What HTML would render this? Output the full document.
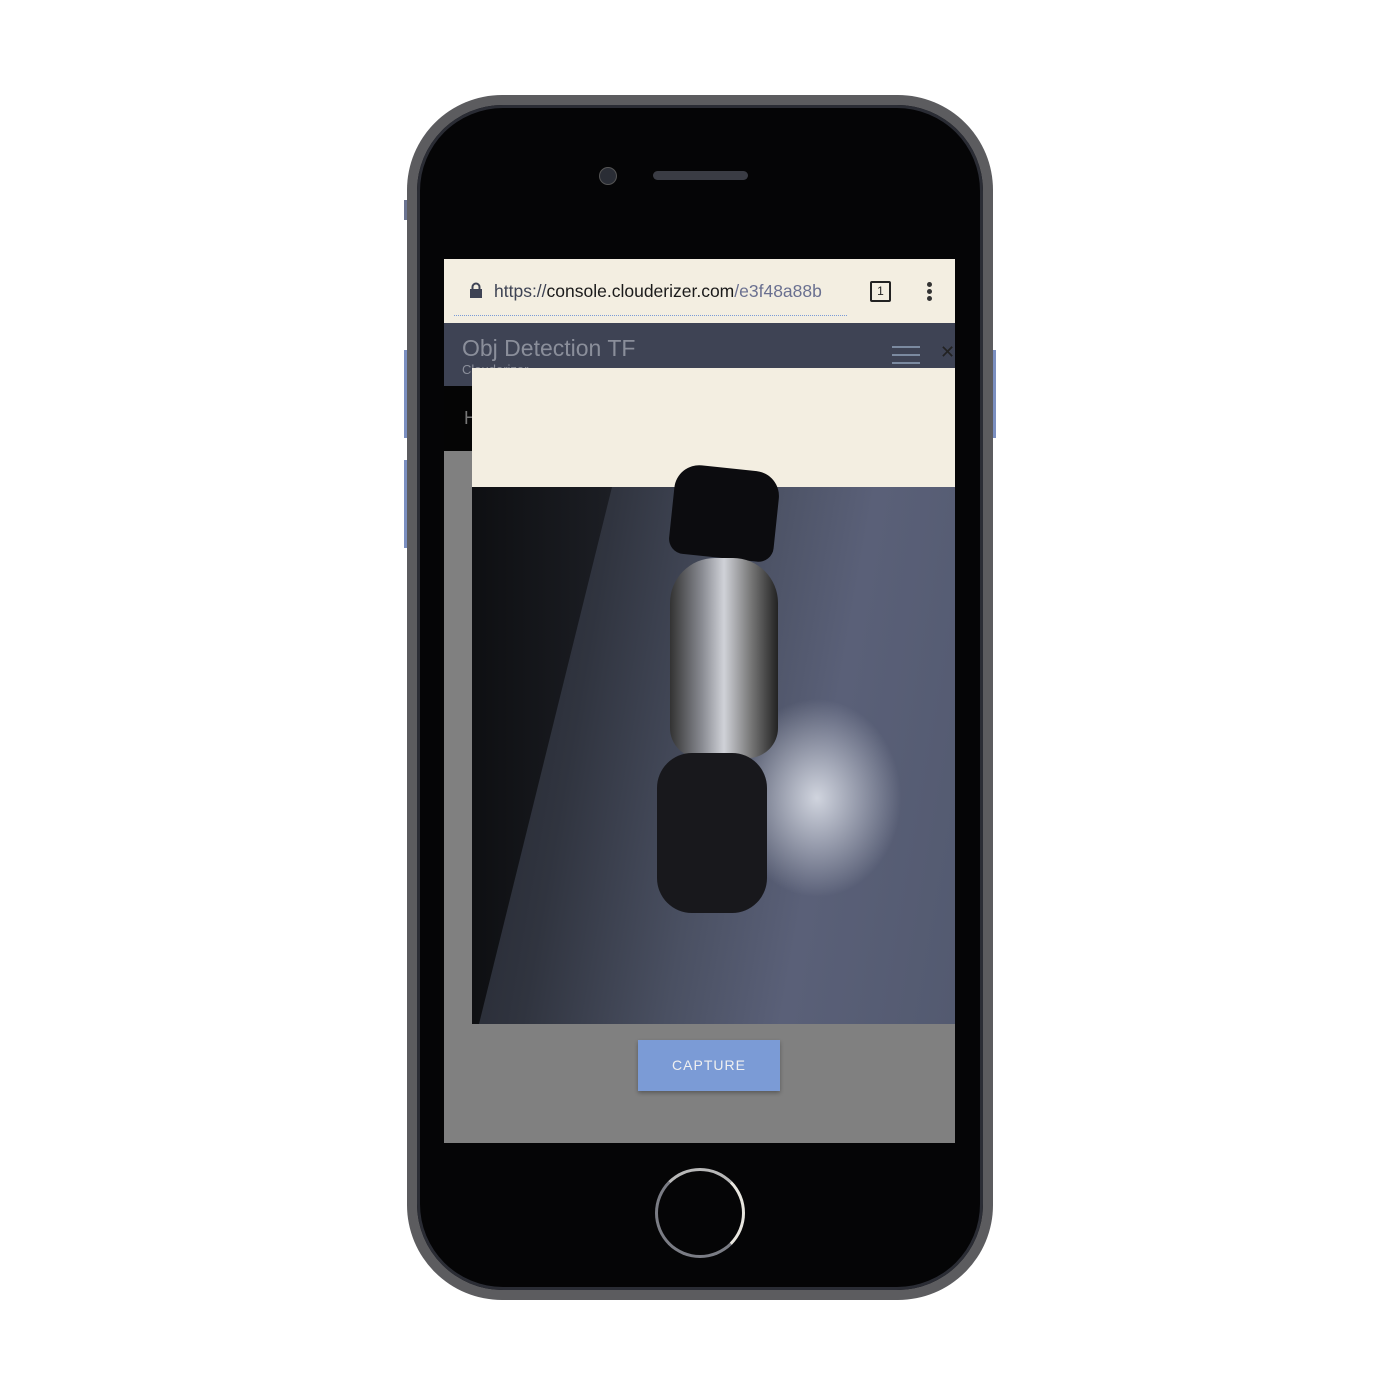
<!DOCTYPE html>
<html><head><style>
body{margin:0;width:1400px;height:1400px;background:#fff;position:relative;overflow:hidden;font-family:"Liberation Sans",sans-serif}
.a{position:absolute}
</style></head><body>
<div class="a" style="left:404px;top:200px;width:4px;height:20px;background:#6a7390"></div>
<div class="a" style="left:404px;top:350px;width:4px;height:88px;background:#7b8fc0"></div>
<div class="a" style="left:404px;top:460px;width:4px;height:88px;background:#7b8fc0"></div>
<div class="a" style="left:992px;top:350px;width:4px;height:88px;background:#7b8fc0"></div>
<div class="a" style="left:407px;top:95px;width:586px;height:1205px;border-radius:95px;background:#5c5c5f"></div>
<div class="a" style="left:417px;top:105px;width:566px;height:1185px;border-radius:86px;background:#050506;box-shadow:inset 0 0 0 3px #2a2c34"></div>
<div class="a" style="left:599px;top:167px;width:16px;height:16px;border-radius:50%;background:#2a2d35;border:1px solid #555"></div>
<div class="a" style="left:653px;top:171px;width:95px;height:9px;border-radius:5px;background:#3a3c44"></div>
<div class="a" style="left:655px;top:1168px;width:84px;height:84px;border-radius:50%;border:3px solid #7a7c84;border-right-color:#e8e6df;border-top-color:#b8b8b8"></div>
<!-- screen -->
<div class="a" style="left:444px;top:259px;width:511px;height:884px;background:#808080"></div>
<div class="a" style="left:444px;top:259px;width:511px;height:64px;background:#f3eee1"></div>
<svg class="a" style="left:469px;top:282px" width="14" height="17"><rect x="1" y="7" width="12" height="9" fill="#3e4354"/><path d="M3.5 7V5a3.5 3.5 0 0 1 7 0v2" stroke="#3e4354" stroke-width="2" fill="none"/></svg>
<div class="a" style="left:494px;top:281px;font-size:17.5px;color:#1a1a1a;white-space:nowrap;width:346px;overflow:hidden"><span style="color:#3e4354">https://</span>console.clouderizer.com<span style="color:#6a7090">/e3f48a88b</span></div>
<div class="a" style="left:454px;top:315px;width:393px;border-top:1px dotted #7b9bd6"></div>
<div class="a" style="left:870px;top:281px;width:17px;height:17px;border:2px solid #222;border-radius:2px;font-size:12px;text-align:center;line-height:17px;color:#222">1</div>
<div class="a" style="left:927px;top:282px;width:5px;height:5px;border-radius:50%;background:#333;box-shadow:0 7px 0 #333,0 14px 0 #333"></div>
<div class="a" style="left:444px;top:323px;width:511px;height:63px;background:#3e4354"></div>
<div class="a" style="left:462px;top:335px;font-size:23px;color:#8a8e9a">Obj Detection TF</div>
<div class="a" style="left:462px;top:362px;font-size:13px;color:#8a8e9a">Clouderizer</div>
<div class="a" style="left:892px;top:346px;width:28px;height:2px;background:#7b8aa0;box-shadow:0 8px 0 #7b8aa0,0 16px 0 #7b8aa0"></div>
<div class="a" style="left:940px;top:342px;font-size:18px;color:#222">✕</div>
<div class="a" style="left:444px;top:386px;width:511px;height:65px;background:#050505"></div>
<div class="a" style="left:464px;top:408px;font-size:18px;color:#777">H</div>
<!-- image -->
<div class="a" style="left:472px;top:368px;width:483px;height:656px;background:#2e3240;overflow:hidden">
 <div class="a" style="left:0;top:0;width:483px;height:119px;background:#f3eee1"></div>
 <div class="a" style="left:0;top:119px;width:483px;height:537px;background:linear-gradient(100deg,#22252e 0%,#30343f 25%,#4a5062 50%,#5a6078 70%,#535a70 100%)"></div>
 <div class="a" style="left:0;top:119px;width:140px;height:537px;background:linear-gradient(90deg,#0e0f12,#1c1e24);clip-path:polygon(0 0,100% 0,5% 100%,0 100%)"></div>
 <div class="a" style="left:260px;top:330px;width:170px;height:200px;border-radius:50%;background:radial-gradient(#d0d4de,rgba(120,130,160,0) 70%)"></div>
 <div class="a" style="left:200px;top:100px;width:105px;height:90px;border-radius:25px 25px 15px 15px;background:#0c0c0f;transform:rotate(6deg)"></div>
 <div class="a" style="left:198px;top:190px;width:108px;height:200px;border-radius:45px 45px 30px 30px;background:linear-gradient(90deg,#333,#8a8c93 30%,#d0d2d8 50%,#777 75%,#222)"></div>
 <div class="a" style="left:185px;top:385px;width:110px;height:160px;border-radius:35px;background:#18181c"></div>
</div>
<div class="a" style="left:638px;top:1040px;width:142px;height:51px;background:#7b9bd6;box-shadow:0 2px 4px rgba(0,0,0,.3);color:#f0f0f0;font-size:14px;letter-spacing:1px;text-align:center;line-height:51px">CAPTURE</div>
</body></html>
